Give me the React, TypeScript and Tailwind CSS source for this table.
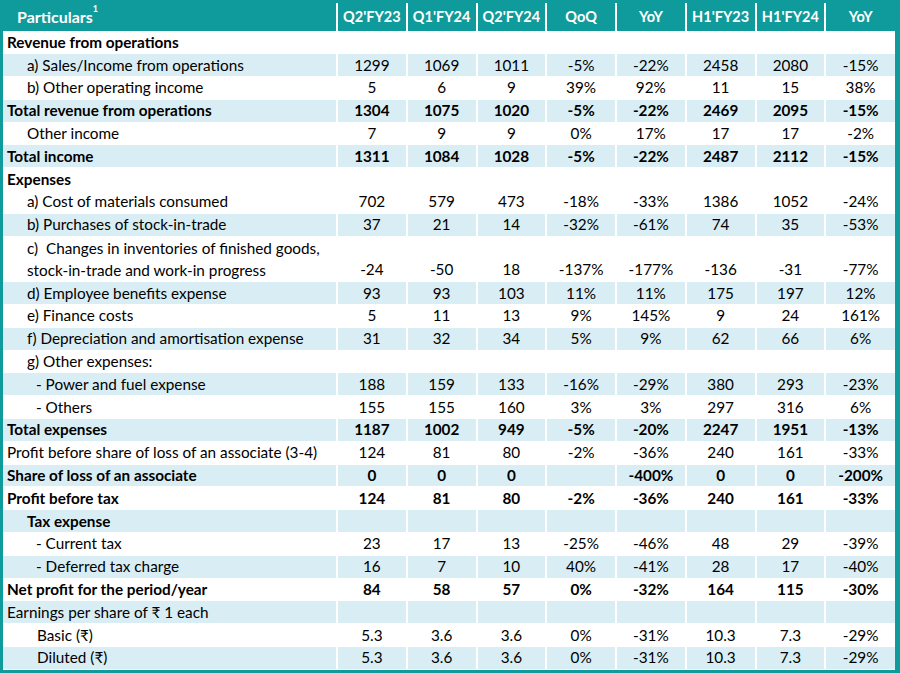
type Row = {
  label: string;
  line2?: string;
  vals?: string[];
  bold?: boolean;
  indent?: 0 | 1 | 2 | 3;
  shade?: boolean;
};

const columns = ["Q2'FY23", "Q1'FY24", "Q2'FY24", "QoQ", "YoY", "H1'FY23", "H1'FY24", "YoY"];

const rows: Row[] = [
  { label: "Revenue from operations", bold: true },
  { label: "a) Sales/Income from operations", indent: 1, shade: true, vals: ["1299", "1069", "1011", "-5%", "-22%", "2458", "2080", "-15%"] },
  { label: "b) Other operating income", indent: 1, vals: ["5", "6", "9", "39%", "92%", "11", "15", "38%"] },
  { label: "Total revenue from operations", bold: true, shade: true, vals: ["1304", "1075", "1020", "-5%", "-22%", "2469", "2095", "-15%"] },
  { label: "Other income", indent: 1, vals: ["7", "9", "9", "0%", "17%", "17", "17", "-2%"] },
  { label: "Total income", bold: true, shade: true, vals: ["1311", "1084", "1028", "-5%", "-22%", "2487", "2112", "-15%"] },
  { label: "Expenses", bold: true },
  { label: "a) Cost of materials consumed", indent: 1, vals: ["702", "579", "473", "-18%", "-33%", "1386", "1052", "-24%"] },
  { label: "b) Purchases of stock-in-trade", indent: 1, shade: true, vals: ["37", "21", "14", "-32%", "-61%", "74", "35", "-53%"] },
  { label: "c)\u00a0 Changes in inventories of finished goods,", line2: "stock-in-trade and work-in progress", indent: 1, vals: ["-24", "-50", "18", "-137%", "-177%", "-136", "-31", "-77%"] },
  { label: "d) Employee benefits expense", indent: 1, shade: true, vals: ["93", "93", "103", "11%", "11%", "175", "197", "12%"] },
  { label: "e) Finance costs", indent: 1, vals: ["5", "11", "13", "9%", "145%", "9", "24", "161%"] },
  { label: "f) Depreciation and amortisation expense", indent: 1, shade: true, vals: ["31", "32", "34", "5%", "9%", "62", "66", "6%"] },
  { label: "g) Other expenses:", indent: 1 },
  { label: "- Power and fuel expense", indent: 2, shade: true, vals: ["188", "159", "133", "-16%", "-29%", "380", "293", "-23%"] },
  { label: "- Others", indent: 2, vals: ["155", "155", "160", "3%", "3%", "297", "316", "6%"] },
  { label: "Total expenses", bold: true, shade: true, vals: ["1187", "1002", "949", "-5%", "-20%", "2247", "1951", "-13%"] },
  { label: "Profit before share of loss of an associate (3-4)", vals: ["124", "81", "80", "-2%", "-36%", "240", "161", "-33%"] },
  { label: "Share of loss of an associate", bold: true, shade: true, vals: ["0", "0", "0", "", "-400%", "0", "0", "-200%"] },
  { label: "Profit before tax", bold: true, vals: ["124", "81", "80", "-2%", "-36%", "240", "161", "-33%"] },
  { label: "Tax expense", bold: true, indent: 1, shade: true },
  { label: "- Current tax", indent: 2, vals: ["23", "17", "13", "-25%", "-46%", "48", "29", "-39%"] },
  { label: "- Deferred tax charge", indent: 2, shade: true, vals: ["16", "7", "10", "40%", "-41%", "28", "17", "-40%"] },
  { label: "Net profit for the period/year", bold: true, vals: ["84", "58", "57", "0%", "-32%", "164", "115", "-30%"] },
  { label: "Earnings per share of \u20b9 1 each", shade: true },
  { label: "Basic (\u20b9)", indent: 3, vals: ["5.3", "3.6", "3.6", "0%", "-31%", "10.3", "7.3", "-29%"] },
  { label: "Diluted (\u20b9)", indent: 3, shade: true, vals: ["5.3", "3.6", "3.6", "0%", "-31%", "10.3", "7.3", "-29%"] },
];

const indentClass = ["pl-[4px]", "pl-[24px]", "pl-[33px]", "pl-[34px]"];

export default function App() {
  return (
    <div
      className="w-[900px] h-[673px] bg-[#0f9b9b] pt-[3px] pl-[3px] pr-[5px] pb-[3px] overflow-hidden"
      style={{ fontFamily: "Lato, 'Noto Sans', sans-serif" }}
    >
      <table className="w-full table-fixed border-collapse bg-white text-[15.3px] text-black">
        <colgroup>
          <col className="w-[334px]" />
          {columns.map((_, i) => (
            <col key={i} />
          ))}
        </colgroup>
        <thead>
          <tr className="h-[28px] bg-[#0f9b9b] text-white">
            <th className="text-left font-bold text-[16px] leading-[18px] pl-[14px] border-r-2 border-white">
              Particulars<sup className="text-[9px] align-[7px]">1</sup>
            </th>
            {columns.map((c, i) => (
              <th
                key={i}
                className={`text-center font-bold text-[14.5px] leading-[18px] ${i < columns.length - 1 ? "border-r-2 border-white" : ""}`}
              >
                {c}
              </th>
            ))}
          </tr>
        </thead>
        <tbody>
          {rows.map((r, i) => (
            <tr
              key={i}
              className={`${r.line2 ? "h-[45.6px]" : "h-[22.8px]"} ${r.shade ? "bg-[#d9eef4]" : "bg-white"}`}
            >
              <td
                className={`border-r-2 border-b border-white leading-[17px] p-0 whitespace-nowrap ${indentClass[r.indent ?? 0]} ${r.bold ? "font-bold" : ""}`}
              >
                {r.line2 ? (
                  <div className="leading-[22px]">
                    <div>{r.label}</div>
                    <div>{r.line2}</div>
                  </div>
                ) : (
                  r.label
                )}
              </td>
              {columns.map((_, j) => (
                <td
                  key={j}
                  className={`text-center border-b border-white p-0 leading-[17px] ${r.line2 ? "align-bottom pb-[3px]" : ""} ${j < columns.length - 1 ? "border-r-2" : ""} ${r.bold ? "font-bold" : ""}`}
                >
                  {r.vals?.[j] ?? ""}
                </td>
              ))}
            </tr>
          ))}
        </tbody>
      </table>
    </div>
  );
}
